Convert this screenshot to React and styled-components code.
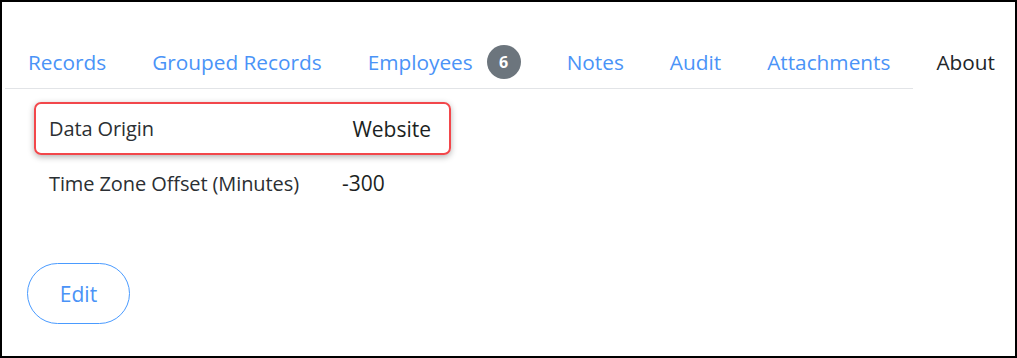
import React from 'react';
import styled, { createGlobalStyle } from 'styled-components';

const GlobalStyle = createGlobalStyle`
  html, body {
    margin: 0;
    padding: 0;
    background: #fff;
  }
  body {
    font-family: 'Open Sans', 'Noto Sans', Arial, sans-serif;
    color: #212529;
  }
`;

const Frame = styled.div`
  box-sizing: border-box;
  width: 1017px;
  height: 358px;
  border: 2px solid #000;
  padding: 31px 0 0 3px;
  overflow: hidden;
`;

const TabBar = styled.nav`
  display: flex;
  align-items: stretch;
`;

const Tab = styled.a`
  display: flex;
  flex-shrink: 0;
  align-items: center;
  gap: 14px;
  height: 56px;
  padding: 2px 23px 0;
  font-size: 20.8px;
  white-space: nowrap;
  text-decoration: none;
  color: ${p => (p.$active ? '#212529' : '#4a93f7')};
  border-bottom: ${p => (p.$active ? 'none' : '1px solid #e2e4e7')};
  box-sizing: border-box;
  cursor: pointer;
`;

const Badge = styled.span`
  display: inline-flex;
  align-items: center;
  justify-content: center;
  width: 34px;
  height: 34px;
  border-radius: 50%;
  background: #6c757d;
  color: #fff;
  font-size: 16px;
  font-weight: 700;
`;

const Content = styled.div`
  padding: 13px 0 0 29px;
`;

const Highlight = styled.div`
  display: flex;
  justify-content: space-between;
  align-items: center;
  box-sizing: border-box;
  width: 417px;
  height: 53px;
  padding: 0 18px 0 13px;
  border: 2px solid #f2474b;
  border-radius: 7px;
  box-shadow: 0 2px 6px rgba(0, 0, 0, 0.3);
`;

const Row = styled.div`
  display: grid;
  grid-template-columns: 293px auto;
  align-items: center;
  padding: 14px 0 0 15px;
`;

const Label = styled.span`
  font-size: 20px;
  letter-spacing: -0.1px;
  color: #2b2f33;
`;

const Value = styled.span`
  font-size: 21px;
  color: #1c1f22;
`;

const EditButton = styled.button`
  display: block;
  margin: 66px 0 0 -7px;
  width: 103px;
  height: 61px;
  border: 1px solid #4a9bff;
  border-radius: 31px;
  background: #fff;
  color: #4a93f7;
  font-family: inherit;
  font-size: 21px;
  cursor: pointer;
`;

const tabs = [
  { label: 'Records' },
  { label: 'Grouped Records' },
  { label: 'Employees', badge: 6 },
  { label: 'Notes' },
  { label: 'Audit' },
  { label: 'Attachments' },
  { label: 'About', active: true },
];

export default function App() {
  return (
    <>
      <GlobalStyle />
      <Frame>
        <TabBar>
          {tabs.map(t => (
            <Tab key={t.label} $active={t.active}>
              {t.label}
              {t.badge && <Badge>{t.badge}</Badge>}
            </Tab>
          ))}
        </TabBar>
        <Content>
          <Highlight>
            <Label>Data Origin</Label>
            <Value>Website</Value>
          </Highlight>
          <Row>
            <Label>Time Zone Offset (Minutes)</Label>
            <Value>-300</Value>
          </Row>
          <EditButton>Edit</EditButton>
        </Content>
      </Frame>
    </>
  );
}
